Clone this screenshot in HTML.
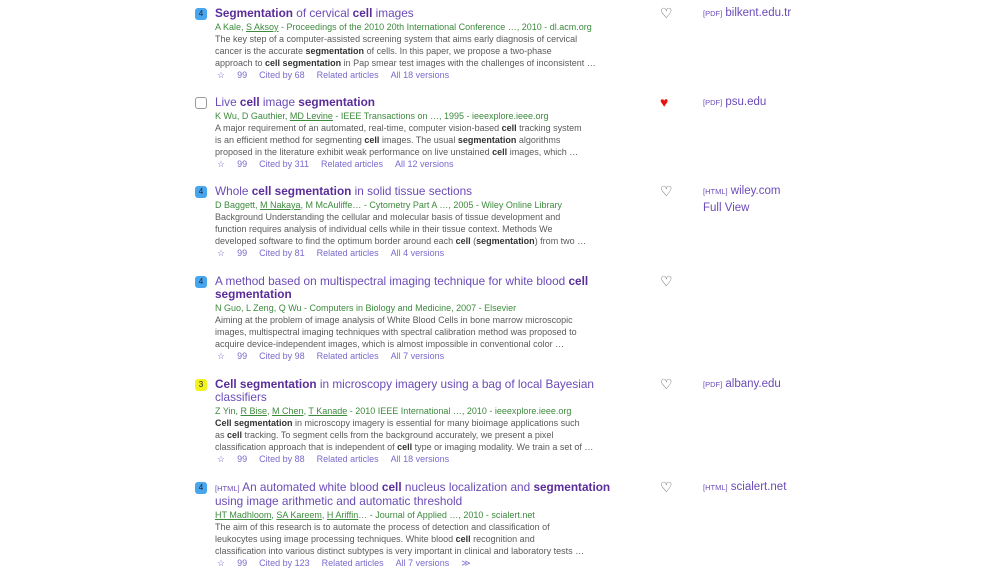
<!DOCTYPE html><html><head><meta charset="utf-8"><style>
body{margin:0;width:1000px;height:563px;background:#fff;overflow:hidden;font-family:"Liberation Sans",Arial,sans-serif;position:relative}
.r{position:absolute;left:215px;width:420px}
.t{font-size:11.8px;color:#6b4bb8;line-height:13px;white-space:nowrap}
.t b{color:#5a2d9a}
.a{font-size:9px;color:#3d8a3d;line-height:12px;margin-top:1px;white-space:nowrap}
.a u{text-decoration:underline}
.s{font-size:9px;color:#5a5a5a;line-height:12px;white-space:nowrap}
.s b{color:#333}
.l{font-size:9px;color:#7a6acb;line-height:12px;white-space:nowrap;padding-left:2px}
.l span{margin-right:12px}
.bd{position:absolute;left:195px;width:12px;height:12px;border-radius:3px;font-size:8px;text-align:center;line-height:12px;color:#223}
.b4{background:#48a6ee}.b3{background:#f2f21c}.b0{background:#fff;border:1px solid #999;width:10px;height:10px}
.h{position:absolute;left:660px;font-size:14px;color:#444;line-height:13px}
.p{position:absolute;left:703px;font-size:11.5px;color:#6b4bb8;line-height:16px}
.sm{font-size:7.5px}
</style></head><body>

<div class="bd b4" style="top:8px">4</div>
<div class="r" style="top:7px"><div class="t"><b>Segmentation</b> of cervical <b>cell</b> images</div>
<div class="a">A Kale, <u>S Aksoy</u> - Proceedings of the 2010 20th International Conference …, 2010 - dl.acm.org</div>
<div class="s">The key step of a computer-assisted screening system that aims early diagnosis of cervical<br>cancer is the accurate <b>segmentation</b> of cells. In this paper, we propose a two-phase<br>approach to <b>cell segmentation</b> in Pap smear test images with the challenges of inconsistent …</div>
<div class="l"><span>☆</span><span>99</span><span>Cited by 68</span><span>Related articles</span><span>All 18 versions</span></div></div>
<div class="h" style="top:7px">♡</div><div class="p" style="top:5px"><span class="sm">[PDF]</span> bilkent.edu.tr</div>

<div class="bd b0" style="top:97px"></div>
<div class="r" style="top:96px"><div class="t">Live <b>cell</b> image <b>segmentation</b></div>
<div class="a">K Wu, D Gauthier, <u>MD Levine</u> - IEEE Transactions on …, 1995 - ieeexplore.ieee.org</div>
<div class="s">A major requirement of an automated, real-time, computer vision-based <b>cell</b> tracking system<br>is an efficient method for segmenting <b>cell</b> images. The usual <b>segmentation</b> algorithms<br>proposed in the literature exhibit weak performance on live unstained <b>cell</b> images, which …</div>
<div class="l"><span>☆</span><span>99</span><span>Cited by 311</span><span>Related articles</span><span>All 12 versions</span></div></div>
<div class="h" style="top:96px;color:#e8130f">♥</div><div class="p" style="top:94px"><span class="sm">[PDF]</span> psu.edu</div>

<div class="bd b4" style="top:186px">4</div>
<div class="r" style="top:185px"><div class="t">Whole <b>cell segmentation</b> in solid tissue sections</div>
<div class="a">D Baggett, <u>M Nakaya</u>, M McAuliffe… - Cytometry Part A …, 2005 - Wiley Online Library</div>
<div class="s">Background Understanding the cellular and molecular basis of tissue development and<br>function requires analysis of individual cells while in their tissue context. Methods We<br>developed software to find the optimum border around each <b>cell</b> (<b>segmentation</b>) from two …</div>
<div class="l"><span>☆</span><span>99</span><span>Cited by 81</span><span>Related articles</span><span>All 4 versions</span></div></div>
<div class="h" style="top:185px">♡</div><div class="p" style="top:183px"><span class="sm">[HTML]</span> wiley.com<br>Full View</div>

<div class="bd b4" style="top:276px">4</div>
<div class="r" style="top:275px"><div class="t">A method based on multispectral imaging technique for white blood <b>cell</b><br><b>segmentation</b></div>
<div class="a">N Guo, L Zeng, Q Wu - Computers in Biology and Medicine, 2007 - Elsevier</div>
<div class="s">Aiming at the problem of image analysis of White Blood Cells in bone marrow microscopic<br>images, multispectral imaging techniques with spectral calibration method was proposed to<br>acquire device-independent images, which is almost impossible in conventional color …</div>
<div class="l"><span>☆</span><span>99</span><span>Cited by 98</span><span>Related articles</span><span>All 7 versions</span></div></div>
<div class="h" style="top:275px">♡</div>

<div class="bd b3" style="top:379px">3</div>
<div class="r" style="top:378px"><div class="t"><b>Cell segmentation</b> in microscopy imagery using a bag of local Bayesian<br>classifiers</div>
<div class="a">Z Yin, <u>R Bise</u>, <u>M Chen</u>, <u>T Kanade</u> - 2010 IEEE International …, 2010 - ieeexplore.ieee.org</div>
<div class="s"><b>Cell segmentation</b> in microscopy imagery is essential for many bioimage applications such<br>as <b>cell</b> tracking. To segment cells from the background accurately, we present a pixel<br>classification approach that is independent of <b>cell</b> type or imaging modality. We train a set of …</div>
<div class="l"><span>☆</span><span>99</span><span>Cited by 88</span><span>Related articles</span><span>All 18 versions</span></div></div>
<div class="h" style="top:378px">♡</div><div class="p" style="top:376px"><span class="sm">[PDF]</span> albany.edu</div>

<div class="bd b4" style="top:482px">4</div>
<div class="r" style="top:481px"><div class="t"><span class="sm">[HTML]</span> An automated white blood <b>cell</b> nucleus localization and <b>segmentation</b><br>using image arithmetic and automatic threshold</div>
<div class="a"><u>HT Madhloom</u>, <u>SA Kareem</u>, <u>H Ariffin</u>… - Journal of Applied …, 2010 - scialert.net</div>
<div class="s">The aim of this research is to automate the process of detection and classification of<br>leukocytes using image processing techniques. White blood <b>cell</b> recognition and<br>classification into various distinct subtypes is very important in clinical and laboratory tests …</div>
<div class="l"><span>☆</span><span>99</span><span>Cited by 123</span><span>Related articles</span><span>All 7 versions</span><span>≫</span></div></div>
<div class="h" style="top:481px">♡</div><div class="p" style="top:479px"><span class="sm">[HTML]</span> scialert.net</div>
</body></html>
